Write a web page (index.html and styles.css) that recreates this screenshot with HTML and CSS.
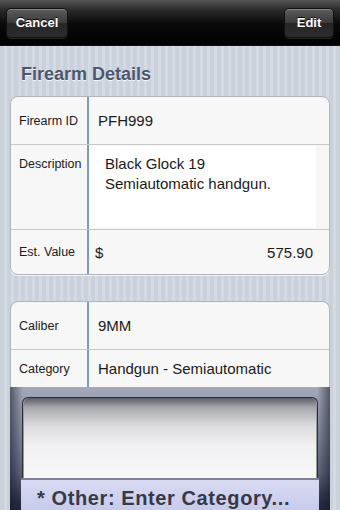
FILE: index.html
```html
<!DOCTYPE html>
<html>
<head>
<meta name="viewport" content="width=device-width, initial-scale=1">
<link rel="stylesheet" href="styles.css">
</head>
<body>

<div class="navbar">
  <span class="nav-btn">Cancel</span>
  <span class="nav-btn">Edit</span>
</div>

<h2 class="section-title">Firearm Details</h2>

<div class="card">
  <div class="row row-id">
    <div class="row__label">Firearm ID</div>
    <div class="row__value">PFH999</div>
  </div>
  <div class="row row-desc">
    <div class="row__label">Description</div>
    <div class="row__value">
      <div class="textarea">Black Glock 19<br>Semiautomatic handgun.</div>
    </div>
  </div>
  <div class="row row-money">
    <div class="row__label">Est. Value</div>
    <div class="row__value money">
      <span>$</span>
      <span>575.90</span>
    </div>
  </div>
</div>

<div class="card card--open">
  <div class="row row-id">
    <div class="row__label">Caliber</div>
    <div class="row__value">9MM</div>
  </div>
  <div class="row row-cat">
    <div class="row__label">Category</div>
    <div class="row__value">Handgun - Semiautomatic</div>
  </div>
</div>

<div class="picker">
  <div class="picker__wheel"></div>
  <div class="picker__selected">* Other: Enter Category...</div>
</div>

</body>
</html>
```

FILE: styles.css
```css
* {box-sizing: border-box;}

body {
  margin: 0;
  font-family: "Liberation Sans", Arial, sans-serif;
  color: #1a1a1a;
  background: repeating-linear-gradient(90deg, #cbd1da 0, #cbd1da 4px, #d4dae2 4px, #d4dae2 7px);
  overflow: hidden;
}

/* top bar */
.navbar {
  height: 46px;
  display: flex;
  justify-content: space-between;
  align-items: center;
  padding: 0 6px;
  background: linear-gradient(#555 0, #2a2a2a 10px, #0a0a0a 24px, #000 100%);
  border-bottom: 1px solid #111;
}
.nav-btn {
  height: 30px;
  line-height: 28px;
  color: #fff;
  font-size: 13px;
  font-weight: bold;
  text-align: center;
  text-shadow: 0 -1px 0 #000;
  border: 1px solid #111;
  border-radius: 5px;
  background: linear-gradient(#5e5e5e, #3a3a3a 50%, #262626 51%, #2c2c2c);
  box-shadow: inset 0 1px 0 rgba(255,255,255,0.25), 0 1px 0 rgba(255,255,255,0.15);
}
.nav-btn:first-child {width: 62px;}
.nav-btn:last-child {width: 50px;}

.section-title {
  margin: 18px 0 11px 21px;
  font-size: 18px;
  line-height: 21px;
  color: #4c566e;
  text-shadow: 0 1px 0 rgba(255,255,255,0.8);
}

/* grouped table */
.card {
  margin: 0 10px 26px;
  background: #f7f7f7;
  border: 1px solid #b1b5bb;
  border-radius: 8px;
  overflow: hidden;
  box-shadow: 0 1px 0 rgba(255,255,255,0.7);
}
.card--open {
  margin-bottom: 0;
  border-bottom: none;
  border-radius: 8px 8px 0 0;
}
.row {
  display: flex;
  border-top: 1px solid #c9c9c9;
}
.row:first-child {border-top: none;}
.row__label {
  width: 78px;
  padding-left: 8px;
  font-size: 12.5px;
  border-right: 2px solid #7b9cc2;
  display: flex;
  align-items: center;
}
.row__value {
  flex: 1;
  padding-left: 9px;
  font-size: 15px;
  display: flex;
  align-items: center;
}

.row-id {height: 47px;}
.row-cat {height: 38px;}
.row-money {height: 45px;}

.row-desc {height: 85px;}
.row-desc .row__label {
  align-items: flex-start;
  padding-top: 12px;
}
.row-desc .row__value {
  padding: 1px 13px 1px 0;
  align-items: stretch;
}
.textarea {
  flex: 1;
  background: #fff;
  padding: 8px 0 0 16px;
  line-height: 20px;
}

.row-money .row__value {
  padding-left: 6px;
}
.money {
  justify-content: space-between;
  padding-right: 16px;
}

/* picker */
.picker {
  margin: 0 10px;
  height: 130px;
  padding: 10px 12px 0;
  background:
    linear-gradient(90deg, rgba(20,24,40,0.55) 0, rgba(20,24,40,0) 4%, rgba(20,24,40,0) 96%, rgba(20,24,40,0.55) 100%),
    linear-gradient(#a3a9b9 0, #858b9f 35%, #626780 65%, #2c3045 88%, #1d2135 100%);
}
.picker__wheel {
  height: 81px;
  border: 1px solid #2a2d38;
  border-bottom: none;
  border-radius: 6px 6px 0 0;
  background: linear-gradient(#5a5c66 0, #a7a8ae 12%, #dcdce0 35%, #f1f1f3 60%, #f7f7f8 100%);
  box-shadow: inset 1px 0 0 #999, inset -1px 0 0 #999;
}
.picker__selected {
  height: 40px;
  margin: 0 -1px;
  border-top: 2px solid #7e8298;
  padding: 7px 0 0 16px;
  font-size: 20px;
  font-weight: bold;
  letter-spacing: 0.6px;
  color: #363947;
  white-space: nowrap;
  overflow: hidden;
  background: linear-gradient(#d9dbf2, #c2c6ea);
}
```
